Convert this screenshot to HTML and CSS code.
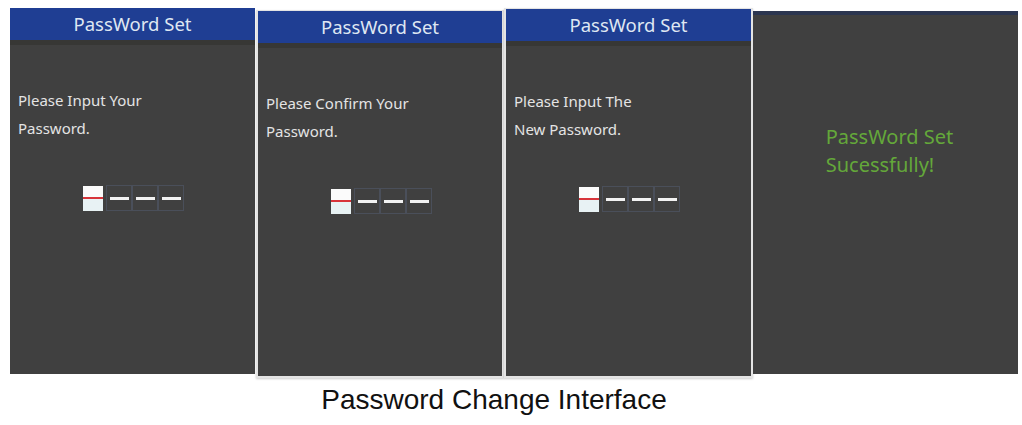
FILE: index.html
```html
<!DOCTYPE html>
<html lang="en">
<head>
<meta charset="UTF-8" />
<title>Password Change Interface</title>
<link rel="stylesheet" href="styles.css">
</head>
<body>

  <div class="screens">
    <div class="screen screen-one">
      <header class="screen-header">PassWord Set</header>
      <div class="screen-body">
        <p class="prompt">Please Input Your<br>Password.</p>
        <div class="code">
          <span class="cell active"><i></i></span>
          <span class="cell"><i></i></span>
          <span class="cell"><i></i></span>
          <span class="cell"><i></i></span>
        </div>
      </div>
    </div>

    <div class="screen screen-two framed">
      <header class="screen-header">PassWord Set</header>
      <div class="screen-body">
        <p class="prompt">Please Confirm Your<br>Password.</p>
        <div class="code">
          <span class="cell active"><i></i></span>
          <span class="cell"><i></i></span>
          <span class="cell"><i></i></span>
          <span class="cell"><i></i></span>
        </div>
      </div>
    </div>

    <div class="screen screen-three framed">
      <header class="screen-header">PassWord Set</header>
      <div class="screen-body">
        <p class="prompt">Please Input The<br>New Password.</p>
        <div class="code">
          <span class="cell active"><i></i></span>
          <span class="cell"><i></i></span>
          <span class="cell"><i></i></span>
          <span class="cell"><i></i></span>
        </div>
      </div>
    </div>

    <div class="screen screen-four">
      <div class="top-strip"></div>
      <div class="done">
        <p class="done-text">PassWord Set<br>Sucessfully!</p>
      </div>
    </div>
  </div>

  <p class="caption">Password Change Interface</p>

</body>
</html>
```

FILE: styles.css
```css
body {
  margin: 0;
  background-color: #ffffff;
  font-family: "Noto Sans", "Open Sans", sans-serif;
}

.screens {
  display: flex;
  align-items: flex-start;
  padding-left: 10px;
  padding-top: 8px;
}

.screen {
  background-color: #404040;
  box-sizing: border-box;
  color: #e6e6e6;
}

.screen-one {
  width: 245px;
  height: 366px;
  margin-right: 1px;
}
.screen-two {
  width: 248px;
  height: 368px;
  margin-top: 2px;
}
.screen-three {
  width: 249px;
  height: 370px;
}
.screen-four {
  width: 265px;
  height: 363px;
  margin-top: 3px;
}

/* light frame round the middle screens */
.framed {
  border: 2px solid #e4e4e4;
  border-top-width: 1px;
  box-shadow: 0 1px 2px rgba(0,0,0,0.2);
}

.screen-header {
  height: 32px;
  line-height: 31px;
  background-color: #1f3e93;
  color: #dfe7f2;
  text-align: center;
  font-size: 18.5px;
  border-bottom: 5px solid #373735;
}

.screen-body {
  padding: 41px 8px 0 8px;
}

.prompt {
  margin: 0;
  font-size: 15px;
  line-height: 28px;
  color: #e4e4e4;
}

.code {
  display: flex;
  margin-top: 43px;
  margin-left: 62px;
}

.cell {
  width: 26px;
  height: 26px;
  box-sizing: border-box;
  border: 1px solid rgba(95, 110, 140, 0.35);
  display: flex;
  align-items: center;
  justify-content: center;
}

.cell i {
  display: block;
  width: 19px;
  height: 3px;
  background-color: #f2f2f2;
}

.cell.active {
  border-color: transparent;
}
.cell.active i {
  width: 20px;
  height: 25px;
  background: linear-gradient(#fbfbfb 0, #fbfbfb 11px, #d8343a 11px, #d8343a 13px, #e8f2f4 13px);
}

.top-strip {
  height: 4px;
  background-color: #2c3650;
}

.done {
  display: flex;
  justify-content: center;
  padding-top: 108px;
  padding-left: 8px;
}

.done-text {
  margin: 0;
  font-size: 20px;
  line-height: 28px;
  color: #64a83a;
}

.caption {
  margin: 7px 0 0 0;
  padding-right: 34px;
  text-align: center;
  font-family: "Liberation Sans", Arial, sans-serif;
  font-size: 28px;
  line-height: 30px;
  color: #111111;
}
```
